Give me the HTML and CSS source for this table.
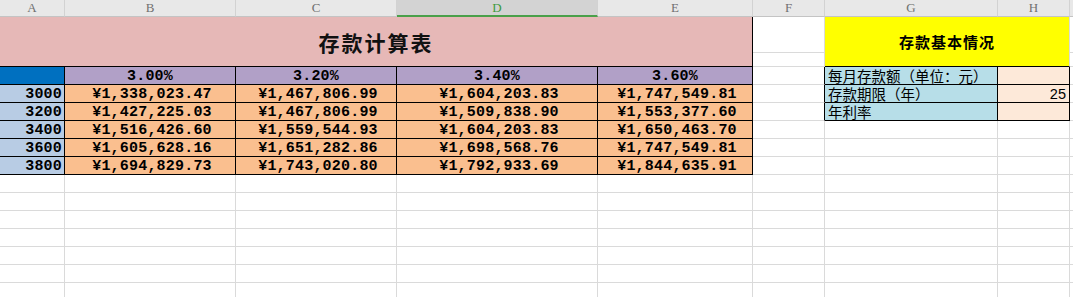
FILE: index.html
```html
<!DOCTYPE html>
<html lang="zh-CN">
<head>
<meta charset="utf-8">
<title>存款计算表</title>
<link rel="stylesheet" href="styles.css">
</head>
<body>
<div class="sheet">
  <div class="ch">A</div><div class="ch">B</div><div class="ch">C</div><div class="ch sel">D</div><div class="ch">E</div><div class="ch">F</div><div class="ch">G</div><div class="ch">H</div><div class="ch last"></div>

  <div class="c title">存款计算表</div><div class="c"></div><div class="c yellow">存款基本情况</div><div class="c"></div>
  <div class="c"></div><div class="c"></div>

  <div class="c corner"></div><div class="c rate">3.00%</div><div class="c rate">3.20%</div><div class="c rate">3.40%</div><div class="c rate">3.60%</div><div class="c br"></div><div class="c info">每月存款额（单位：元）</div><div class="c val"></div><div class="c"></div>

  <div class="c amt">3000</div><div class="c money">¥1,338,023.47</div><div class="c money">¥1,467,806.99</div><div class="c money">¥1,604,203.83</div><div class="c money">¥1,747,549.81</div><div class="c br"></div><div class="c info">存款期限（年）</div><div class="c val">25</div><div class="c"></div>

  <div class="c amt">3200</div><div class="c money">¥1,427,225.03</div><div class="c money">¥1,467,806.99</div><div class="c money">¥1,509,838.90</div><div class="c money">¥1,553,377.60</div><div class="c br"></div><div class="c info">年利率</div><div class="c val"></div><div class="c"></div>

  <div class="c amt">3400</div><div class="c money">¥1,516,426.60</div><div class="c money">¥1,559,544.93</div><div class="c money">¥1,604,203.83</div><div class="c money">¥1,650,463.70</div><div class="c"></div><div class="c"></div><div class="c"></div><div class="c"></div>

  <div class="c amt">3600</div><div class="c money">¥1,605,628.16</div><div class="c money">¥1,651,282.86</div><div class="c money">¥1,698,568.76</div><div class="c money">¥1,747,549.81</div><div class="c"></div><div class="c"></div><div class="c"></div><div class="c"></div>

  <div class="c amt">3800</div><div class="c money">¥1,694,829.73</div><div class="c money">¥1,743,020.80</div><div class="c money">¥1,792,933.69</div><div class="c money">¥1,844,635.91</div><div class="c"></div><div class="c"></div><div class="c"></div><div class="c"></div>

  <div class="c"></div><div class="c"></div><div class="c"></div><div class="c"></div><div class="c"></div><div class="c"></div><div class="c"></div><div class="c"></div><div class="c"></div>
  <div class="c"></div><div class="c"></div><div class="c"></div><div class="c"></div><div class="c"></div><div class="c"></div><div class="c"></div><div class="c"></div><div class="c"></div>
  <div class="c"></div><div class="c"></div><div class="c"></div><div class="c"></div><div class="c"></div><div class="c"></div><div class="c"></div><div class="c"></div><div class="c"></div>
  <div class="c"></div><div class="c"></div><div class="c"></div><div class="c"></div><div class="c"></div><div class="c"></div><div class="c"></div><div class="c"></div><div class="c"></div>
  <div class="c"></div><div class="c"></div><div class="c"></div><div class="c"></div><div class="c"></div><div class="c"></div><div class="c"></div><div class="c"></div><div class="c"></div>
  <div class="c"></div><div class="c"></div><div class="c"></div><div class="c"></div><div class="c"></div><div class="c"></div><div class="c"></div><div class="c"></div><div class="c"></div>
  <div class="c"></div><div class="c"></div><div class="c"></div><div class="c"></div><div class="c"></div><div class="c"></div><div class="c"></div><div class="c"></div><div class="c"></div>
</div>
</body>
</html>
```

FILE: styles.css
```css
html, body {
  margin: 0;
  padding: 0;
  background: #ffffff;
  overflow: hidden;
}

.sheet {
  display: grid;
  grid-template-columns: 65px 171px 161px 201px 155px 72px 173px 72px 30px;
  grid-template-rows: 17px 36px 14px repeat(13, 18px);
  width: 1100px;
  font-family: "Noto Sans CJK SC", sans-serif;
}

.ch {
  box-sizing: border-box;
  background: #e8e8e8;
  border-right: 1px solid #d2d2d2;
  border-bottom: 1px solid #c4c4c4;
  color: #707070;
  font-family: "Liberation Serif", serif;
  font-size: 13px;
  line-height: 14px;
  display: flex;
  align-items: center;
  justify-content: center;
}

.ch.sel {
  background: #d3d3d3;
  color: #3e9a3e;
  border-bottom: 2px solid #4aa04a;
}

.c {
  box-sizing: border-box;
  border-right: 1px solid #dadada;
  border-bottom: 1px solid #dadada;
  display: flex;
  align-items: center;
  min-width: 0;
  line-height: 16px;
  white-space: nowrap;
}

.title {
  grid-column: span 5;
  grid-row: span 2;
  background: #e6b8b7;
  border-right-color: #000;
  border-bottom-color: #000;
  justify-content: center;
  font-size: 21px;
  line-height: 24px;
  font-weight: 700;
  letter-spacing: 2px;
  color: #111;
}

.yellow {
  grid-column: span 2;
  grid-row: span 2;
  background: #ffff00;
  border-bottom-color: #000;
  justify-content: center;
  font-size: 15px;
  line-height: 18px;
  font-weight: 700;
  letter-spacing: 1px;
  color: #000;
}

.corner {
  background: #0070c0;
  border-color: #000;
}

.rate,
.money,
.amt {
  font-family: "Liberation Mono", monospace;
  font-weight: 700;
  font-size: 15px;
  letter-spacing: 0.2px;
  color: #000;
  padding-top: 2px;
}

.rate {
  background: #b1a0c7;
  border-color: #000;
  justify-content: center;
}

.money {
  background: #fabf8f;
  border-color: #000;
  justify-content: center;
  padding-left: 4px;
}

.amt {
  background: #b8cce4;
  border-color: #000;
  justify-content: flex-end;
  padding-right: 2px;
}

.br {
  border-right-color: #000;
}

.info {
  background: #b7dee8;
  border-color: #000;
  font-size: 14.5px;
  line-height: 16px;
  padding-left: 3px;
  padding-top: 1px;
  color: #000;
}

.val {
  background: #fde9d9;
  border-color: #000;
  justify-content: flex-end;
  padding-right: 3px;
  padding-top: 1px;
  font-family: "Liberation Sans", sans-serif;
  font-size: 14.5px;
  color: #000;
}
```
